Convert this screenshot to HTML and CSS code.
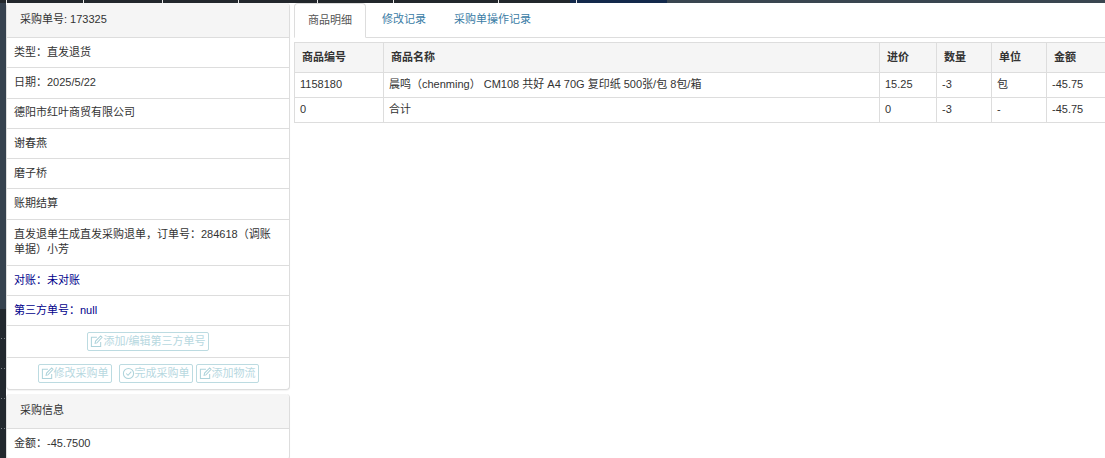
FILE: index.html
```html
<!DOCTYPE html>
<html lang="zh">
<head>
<meta charset="utf-8">
<title>采购单</title>
<link rel="stylesheet" href="styles.css">
</head>
<body>
<div class="topbar"></div>
<div class="layout">
  <div class="strip">
    <div class="strip-top"></div>
    <div class="strip-bottom"></div>
  </div>
  <aside class="side">
    <section class="panel">
      <div class="panel-head">采购单号: 173325</div>
      <div class="row">类型：直发退货</div>
      <div class="row">日期：2025/5/22</div>
      <div class="row">德阳市红叶商贸有限公司</div>
      <div class="row">谢春燕</div>
      <div class="row">磨子桥</div>
      <div class="row">账期结算</div>
      <div class="row">直发退单生成直发采购退单，订单号：284618（调账单据）小芳</div>
      <div class="row blue">对账：未对账</div>
      <div class="row blue">第三方单号：null</div>
      <div class="row btns"><a class="btn"><svg class="ico" viewBox="0 0 14 14"><path d="M11.500 7.500V12.500H1.500V2.500H7.500"/><path d="M5.500 9l.5-2.500L11.500 1l1.500 1.500L7.500 8.500z"/></svg>添加/编辑第三方单号</a></div>
      <div class="row btns">
        <a class="btn"><svg class="ico" viewBox="0 0 14 14"><path d="M11.500 7.500V12.500H1.500V2.500H7.500"/><path d="M5.500 9l.5-2.500L11.500 1l1.500 1.500L7.500 8.500z"/></svg>修改采购单</a>
        <a class="btn btn-gap"><svg class="ico" viewBox="0 0 14 14"><circle cx="7" cy="7" r="5.500"/><path d="M4.500 7l2 2 3.500-4"/></svg>完成采购单</a>
        <a class="btn"><svg class="ico" viewBox="0 0 14 14"><path d="M11.500 7.500V12.500H1.500V2.500H7.500"/><path d="M5.500 9l.5-2.500L11.500 1l1.500 1.500L7.500 8.500z"/></svg>添加物流</a>
      </div>
    </section>
    <section class="panel">
      <div class="panel-head">采购信息</div>
      <div class="row">金额：-45.7500</div>
    </section>
  </aside>
  <main class="content">
    <nav class="tabs">
      <a class="tab active">商品明细</a>
      <a class="tab">修改记录</a>
      <a class="tab">采购单操作记录</a>
    </nav>
    <table class="grid">
      <colgroup><col class="c1"><col class="c2"><col class="c3"><col class="c4"><col class="c5"><col class="c6"></colgroup>
      <thead><tr><th>商品编号</th><th>商品名称</th><th>进价</th><th>数量</th><th>单位</th><th>金额</th></tr></thead>
      <tbody>
        <tr><td>1158180</td><td>晨鸣（chenming） CM108 共好 A4 70G 复印纸 500张/包 8包/箱</td><td>15.25</td><td>-3</td><td>包</td><td>-45.75</td></tr>
        <tr><td>0</td><td>合计</td><td>0</td><td>-3</td><td>-</td><td>-45.75</td></tr>
      </tbody>
    </table>
  </main>
</div>
</body>
</html>
```
FILE: styles.css
```css
* { box-sizing: border-box; }
html, body { margin: 0; height: 458px; overflow: hidden; }
body { background: #fff; font: 11px/15.7px "Liberation Sans", "Noto Sans CJK SC", sans-serif; color: #333; }

.topbar {
  --tick: linear-gradient(#e8e8e8, #e8e8e8);
  height: 3px;
  background:
    var(--tick) 6px 0 / 1px 3px no-repeat,
    var(--tick) 83px 0 / 1px 3px no-repeat,
    var(--tick) 162px 0 / 1px 3px no-repeat,
    var(--tick) 238px 0 / 1px 3px no-repeat,
    var(--tick) 317px 0 / 1px 3px no-repeat,
    var(--tick) 393px 0 / 1px 3px no-repeat,
    var(--tick) 498px 0 / 1px 3px no-repeat,
    var(--tick) 576px 0 / 1px 3px no-repeat,
    linear-gradient(90deg, #22272c 570px, #13294b 570px, #13294b 667px, #3a4650 667px);
}

.layout { display: flex; align-items: flex-start; height: 455px; }
.strip { display: flex; flex-direction: column; flex: none; width: 6px; height: 100%; }
.strip-top { height: 306px; background: #36424f; }
.strip-bottom { flex: 1; background: #22282e radial-gradient(circle at 1.500px 29.500px, #80858a .7px, transparent .8px) 0 0 / 3px 30px; }

.side { width: 284px; flex: none; background: #fff; }
.panel { border: 1px solid #ddd; border-top: 0; border-radius: 4px; margin-bottom: 4px; box-shadow: 0 1px 1px rgba(0,0,0,.05); background: #fff; }
.panel-head { height: 35px; padding: 9px 13px; background: #f5f5f5; border-bottom: 1px solid #ddd; border-radius: 4px 4px 0 0; }
.row { padding: 6.8px 12px 6.8px 7px; border-bottom: 1px solid #ddd; }
.row:last-child { border-bottom: 0; }
.blue { color: #00008b; }

.btns { display: flex; justify-content: center; gap: 3px; height: 32px; padding: 6px 0 0; }
.btns:last-child { height: 31px; }
.btn { display: inline-flex; align-items: center; height: 19px; padding: 0 2px; border: 1px solid #bcdbe1; border-radius: 2px; color: #b7d8df; }
.btn-gap { margin-left: 4px; }
.ico { width: 13px; height: 13px; fill: none; stroke: #aed3db; stroke-width: 1.100; }

.content { flex: 1; padding-left: 4px; min-width: 0; }
.tabs { display: flex; height: 35px; border-bottom: 1px solid #ddd; }
.tab { height: 35px; padding: 9px 14px; color: #3a7ca5; }
.tab.active { margin-right: 2px; padding: 9px 13px; color: #555; background: #fff; border: 1px solid #ddd; border-bottom-color: #fff; border-radius: 4px 4px 0 0; }

.grid { width: calc(100% + 2px); margin-top: 4px; border-collapse: collapse; table-layout: fixed; }
.c1 { width: 89px; }
.c3 { width: 57px; }
.c4, .c5 { width: 55px; }
.c6 { width: 60px; }
.grid th, .grid td { height: 25px; padding: 4px 5px; border: 1px solid #ddd; text-align: left; font-weight: 400; }
.grid th { height: 30px; padding: 6px 7px; background: #f5f5f5; font-weight: 700; }
```
